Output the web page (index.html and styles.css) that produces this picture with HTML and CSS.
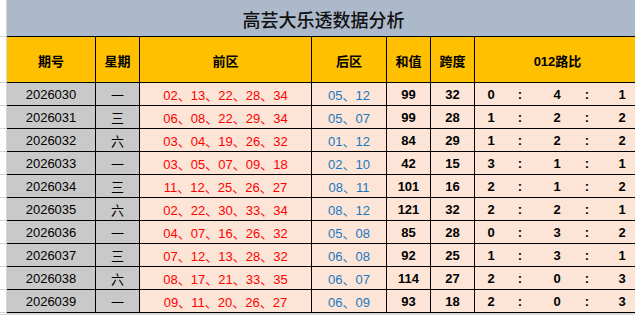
FILE: index.html
```html
<!DOCTYPE html>
<html lang="zh">
<head>
<meta charset="utf-8">
<link rel="stylesheet" href="styles.css">
</head>
<body>
<div class="sheet">
  <div class="row title-row">
    <div class="strip"></div>
    <div class="title">高芸大乐透数据分析</div>
  </div>
  <div class="row head-row">
    <div class="strip"></div>
    <div class="c c1">期号</div>
    <div class="c c2">星期</div>
    <div class="c c3">前区</div>
    <div class="c c4">后区</div>
    <div class="c c5">和值</div>
    <div class="c c6">跨度</div>
    <div class="c c7 head-ratio">012路比</div>
  </div>

  <div class="row body-row">
    <div class="strip"></div>
    <div class="c c1 grey">2026030</div><div class="c c2 grey">一</div>
    <div class="c c3 red">02、13、22、28、34</div><div class="c c4 blue">05、12</div>
    <div class="c c5 bold">99</div><div class="c c6 bold">32</div>
    <div class="c c7 ratio"><span class="r1">0</span><span class="r2">:</span><span class="r3">4</span><span class="r4">:</span><span class="r5">1</span></div>
  </div>
  <div class="row body-row">
    <div class="strip"></div>
    <div class="c c1 grey">2026031</div><div class="c c2 grey">三</div>
    <div class="c c3 red">06、08、22、29、34</div><div class="c c4 blue">05、07</div>
    <div class="c c5 bold">99</div><div class="c c6 bold">28</div>
    <div class="c c7 ratio"><span class="r1">1</span><span class="r2">:</span><span class="r3">2</span><span class="r4">:</span><span class="r5">2</span></div>
  </div>
  <div class="row body-row">
    <div class="strip"></div>
    <div class="c c1 grey">2026032</div><div class="c c2 grey">六</div>
    <div class="c c3 red">03、04、19、26、32</div><div class="c c4 blue">01、12</div>
    <div class="c c5 bold">84</div><div class="c c6 bold">29</div>
    <div class="c c7 ratio"><span class="r1">1</span><span class="r2">:</span><span class="r3">2</span><span class="r4">:</span><span class="r5">2</span></div>
  </div>
  <div class="row body-row">
    <div class="strip"></div>
    <div class="c c1 grey">2026033</div><div class="c c2 grey">一</div>
    <div class="c c3 red">03、05、07、09、18</div><div class="c c4 blue">02、10</div>
    <div class="c c5 bold">42</div><div class="c c6 bold">15</div>
    <div class="c c7 ratio"><span class="r1">3</span><span class="r2">:</span><span class="r3">1</span><span class="r4">:</span><span class="r5">1</span></div>
  </div>
  <div class="row body-row">
    <div class="strip"></div>
    <div class="c c1 grey">2026034</div><div class="c c2 grey">三</div>
    <div class="c c3 red">11、12、25、26、27</div><div class="c c4 blue">08、11</div>
    <div class="c c5 bold">101</div><div class="c c6 bold">16</div>
    <div class="c c7 ratio"><span class="r1">2</span><span class="r2">:</span><span class="r3">1</span><span class="r4">:</span><span class="r5">2</span></div>
  </div>
  <div class="row body-row">
    <div class="strip"></div>
    <div class="c c1 grey">2026035</div><div class="c c2 grey">六</div>
    <div class="c c3 red">02、22、30、33、34</div><div class="c c4 blue">08、12</div>
    <div class="c c5 bold">121</div><div class="c c6 bold">32</div>
    <div class="c c7 ratio"><span class="r1">2</span><span class="r2">:</span><span class="r3">2</span><span class="r4">:</span><span class="r5">1</span></div>
  </div>
  <div class="row body-row">
    <div class="strip"></div>
    <div class="c c1 grey">2026036</div><div class="c c2 grey">一</div>
    <div class="c c3 red">04、07、16、26、32</div><div class="c c4 blue">05、08</div>
    <div class="c c5 bold">85</div><div class="c c6 bold">28</div>
    <div class="c c7 ratio"><span class="r1">0</span><span class="r2">:</span><span class="r3">3</span><span class="r4">:</span><span class="r5">2</span></div>
  </div>
  <div class="row body-row">
    <div class="strip"></div>
    <div class="c c1 grey">2026037</div><div class="c c2 grey">三</div>
    <div class="c c3 red">07、12、13、28、32</div><div class="c c4 blue">06、08</div>
    <div class="c c5 bold">92</div><div class="c c6 bold">25</div>
    <div class="c c7 ratio"><span class="r1">1</span><span class="r2">:</span><span class="r3">3</span><span class="r4">:</span><span class="r5">1</span></div>
  </div>
  <div class="row body-row">
    <div class="strip"></div>
    <div class="c c1 grey">2026038</div><div class="c c2 grey">六</div>
    <div class="c c3 red">08、17、21、33、35</div><div class="c c4 blue">06、07</div>
    <div class="c c5 bold">114</div><div class="c c6 bold">27</div>
    <div class="c c7 ratio"><span class="r1">2</span><span class="r2">:</span><span class="r3">0</span><span class="r4">:</span><span class="r5">3</span></div>
  </div>
  <div class="row body-row">
    <div class="strip"></div>
    <div class="c c1 grey">2026039</div><div class="c c2 grey">一</div>
    <div class="c c3 red">09、11、20、26、27</div><div class="c c4 blue">06、09</div>
    <div class="c c5 bold">93</div><div class="c c6 bold">18</div>
    <div class="c c7 ratio"><span class="r1">2</span><span class="r2">:</span><span class="r3">0</span><span class="r4">:</span><span class="r5">3</span></div>
  </div>
  <div class="row tail-row">
    <div class="strip"></div>
    <div class="tail"></div>
  </div>
</div>
</body>
</html>
```

FILE: styles.css
```css
html, body {
  margin: 0;
  padding: 0;
  background: #ffffff;
}
body {
  width: 635px;
  height: 315px;
  overflow: hidden;
  font-family: "Liberation Sans", Arial, "Noto Sans CJK SC", sans-serif;
  font-size: 13px;
  color: #000;
}
.sheet {
  display: flex;
  flex-direction: column;
  width: 640px;
}
.row {
  display: flex;
  flex: none;
}
.strip {
  flex: none;
  width: 7px;
  box-sizing: border-box;
  border-right: 1px solid #d4d4d4;
  border-bottom: 1px solid #d4d4d4;
  background: #fff;
}
.title-row { height: 37px; }
.title {
  flex: none;
  width: 633px;
  box-sizing: border-box;
  background: #acb9ca;
  border-bottom: 1px solid #000;
  display: flex;
  align-items: center;
  justify-content: center;
  padding-top: 2px;
  font-family: "Noto Sans CJK SC", sans-serif;
  font-size: 18px;
  font-weight: 500;
  color: #111;
}
.head-row { height: 46px; }
.body-row { height: 23px; }
.c {
  flex: none;
  box-sizing: border-box;
  border-right: 1px solid #000;
  border-bottom: 1px solid #000;
  display: flex;
  align-items: center;
  justify-content: center;
  white-space: nowrap;
}
.head-row .c {
  background: #ffc000;
  font-weight: bold;
  padding-top: 2px;
}
.c1 { width: 89px; }
.c2 { width: 44px; }
.c3 { width: 172px; }
.c4 { width: 75px; }
.c5 { width: 44px; }
.c6 { width: 44px; }
.c7 { width: 165px; border-right: none; }
.body-row .c { background: #fce4d6; }
.body-row .c.grey { background: #c9c9c9; }
.red { color: #ff0000; }
.blue { color: #1a78c2; }
.bold { font-weight: bold; }
.ratio {
  justify-content: flex-start !important;
  font-weight: bold;
}
.ratio span { flex: none; text-align: center; display: block; }
.r1 { width: 32px; }
.r2 { width: 26px; }
.r3 { width: 48px; }
.r4 { width: 12px; }
.r5 { width: 58px; }
.tail-row { height: 2px; }
.tail {
  flex: none;
  width: 633px;
  background: #d9d9d9;
}
```
